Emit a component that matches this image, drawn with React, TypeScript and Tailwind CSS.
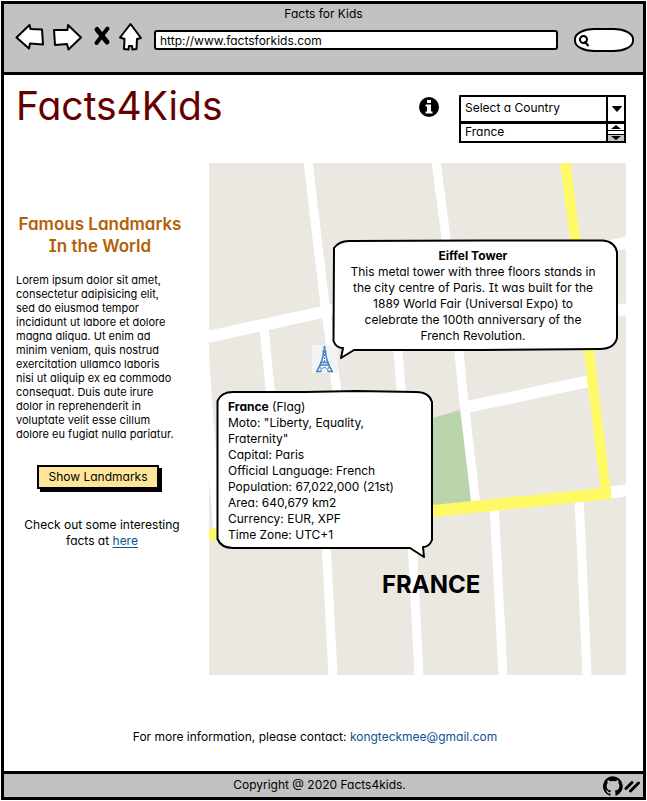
import type { ReactNode } from "react";

const intro = [
  "Lorem ipsum dolor sit amet,",
  "consectetur adipisicing elit,",
  "sed do eiusmod tempor",
  "incididunt ut labore et dolore",
  "magna aliqua. Ut enim ad",
  "minim veniam, quis nostrud",
  "exercitation ullamco laboris",
  "nisi ut aliquip ex ea commodo",
  "consequat. Duis aute irure",
  "dolor in reprehenderit in",
  "voluptate velit esse cillum",
  "dolore eu fugiat nulla pariatur.",
];

const towerFacts = [
  "This metal tower with three floors stands in",
  "the city centre of Paris. It was built for the",
  "1889 World Fair (Universal Expo) to",
  "celebrate the 100th anniversary of the",
  "French Revolution.",
];

const countryFacts = [
  'Moto: "Liberty, Equality,',
  'Fraternity"',
  "Capital: Paris",
  "Official Language: French",
  "Population: 67,022,000 (21st)",
  "Area: 640,679 km2",
  "Currency: EUR, XPF",
  "Time Zone: UTC+1",
];

function Lines({ items }: { items: string[] }) {
  return (
    <>
      {items.map((line) => (
        <span key={line} className="block whitespace-nowrap">
          {line}
        </span>
      ))}
    </>
  );
}

function NavButton({ label, children }: { label: string; children: ReactNode }) {
  return (
    <button type="button" aria-label={label} className="shrink-0">
      {children}
    </button>
  );
}

function BrowserBar() {
  return (
    <header className="h-[71px] border-b-[3px] border-black bg-[#c2c2c2]">
      <p className="pt-0.5 text-center text-xs leading-4">Facts for Kids</p>
      <div className="flex items-start pl-[11px] pr-[9px]">
        <NavButton label="Back">
          <svg width="30" height="30" viewBox="0 0 30 30" fill="#fff" stroke="#000" strokeWidth="2" strokeLinejoin="round">
            <path d="M1.500 15.500 L14.500 3 L15.500 7 L27 7.500 L28 22.500 L15 21.500 L14 26.500 Z" />
          </svg>
        </NavButton>
        <NavButton label="Forward">
          <svg className="ml-2" width="30" height="30" viewBox="0 0 30 30" fill="#fff" stroke="#000" strokeWidth="2" strokeLinejoin="round">
            <path d="M1 8 L14.500 8 L15 3 L28 15.500 L15.500 27.500 L14 22 L2 23 Z" />
          </svg>
        </NavButton>
        <NavButton label="Stop">
          <svg className="ml-2" width="24" height="30" viewBox="0 0 24 30" fill="none" stroke="#000" strokeLinecap="round">
            <path d="M6 7.500 L16 20" strokeWidth="5" />
            <path d="M16.500 6.500 L5.500 21" strokeWidth="4" />
          </svg>
        </NavButton>
        <NavButton label="Home">
          <svg className="ml-1" width="24" height="30" viewBox="0 0 24 30" fill="#fff" stroke="#000" strokeWidth="2" strokeLinejoin="round">
            <path d="M11.500 2 L1 15.500 L5.500 17 L5 27 L9.500 27.500 L10 24 L13 24 L13.500 27.500 L17.500 27 L18 17 L22 16 Z" />
          </svg>
        </NavButton>
        <input
          aria-label="Address"
          defaultValue="http://www.factsforkids.com"
          className="mr-4 ml-[11px] mt-2 h-5 min-w-0 flex-1 rounded-[3px] border-2 border-black bg-white px-1 text-xs outline-none"
        />
        <div className="relative mt-1.5 h-6 w-[60px] shrink-0">
          <input
            aria-label="Search"
            className="block h-6 w-full border-2 border-black bg-white pl-5 pr-2 text-xs outline-none [border-radius:20px/11px]"
          />
          <svg className="absolute left-1 top-1.5" width="12" height="14" viewBox="0 0 12 14" fill="none" stroke="#000" strokeWidth="2" strokeLinecap="round">
            <circle cx="5.500" cy="5.500" r="3.500" />
            <path d="M7 8 L10 11.500" />
          </svg>
        </div>
      </div>
    </header>
  );
}

function CountryPicker() {
  return (
    <div className="w-[167px]">
      <div className="relative">
        <select
          aria-label="Select a Country"
          className="block h-7 w-full appearance-none rounded-[1px] border-2 border-black bg-white pb-0.5 pl-1 text-xs outline-none"
        >
          <option>Select a Country</option>
          <option>France</option>
        </select>
        <span className="pointer-events-none absolute inset-y-0 right-0 flex w-5 items-center justify-center border-l-2 border-black">
          <svg width="10" height="6" viewBox="0 0 10 6">
            <path d="M0.500 0.500 H9.500 L5 5.500 Z" stroke="#000" strokeLinejoin="round" />
          </svg>
        </span>
      </div>
      <div className="-mt-px flex h-[21px] border-2 border-black bg-white">
        <ul role="listbox" aria-label="Countries" className="flex-1 pl-1 text-xs leading-4">
          <li role="option" aria-selected="false">
            France
          </li>
        </ul>
        <div className="flex w-[18px] flex-col border-l-2 border-black">
          <button type="button" aria-label="Scroll up" className="flex flex-1 items-center justify-center border-b border-black">
            <svg width="10" height="4" viewBox="0 0 10 4">
              <path d="M0 4 H10 L5 0 Z" />
            </svg>
          </button>
          <span className="h-1 border-b border-black" />
          <button type="button" aria-label="Scroll down" className="flex flex-1 items-center justify-center bg-[#c2c2c2]">
            <svg width="10" height="4" viewBox="0 0 10 4">
              <path d="M0 0 H10 L5 4 Z" />
            </svg>
          </button>
        </div>
      </div>
    </div>
  );
}

function Sidebar() {
  return (
    <aside className="w-[168px] shrink-0 pt-[50px]">
      <h2 className="text-center text-[17px] font-semibold leading-[22px] text-[#b45f06]">
        <span className="block whitespace-nowrap">Famous Landmarks</span>
        <span className="block">In the World</span>
      </h2>
      <p className="pt-4 text-[11px] leading-[14px]">
        <Lines items={intro} />
      </p>
      <div className="flex justify-center pr-1 pt-6">
        <button
          type="button"
          className="h-6 w-[122px] whitespace-nowrap border-2 border-black bg-[#ffe599] text-xs shadow-[3px_3px_0_0_#000]"
        >
          Show Landmarks
        </button>
      </div>
      <p className="pl-1 pt-7 text-center text-xs leading-4">
        <span className="block whitespace-nowrap">Check out some interesting</span>
        facts at{" "}
        <a href="#facts" className="text-[#0b5394] underline underline-offset-2">
          here
        </a>
      </p>
    </aside>
  );
}

function Streets() {
  return (
    <svg className="absolute inset-0 h-full w-full" viewBox="0 0 417 512" preserveAspectRatio="xMidYMid slice" fill="none">
      <rect width="417" height="512" fill="#ebe8e1" />
      <path d="M200 262 L251 247 L263 340 L200 346 Z" fill="#bad4ac" />
      <g stroke="#fff" strokeWidth="9">
        <path d="M99 -2 L116 142 L128 229 L143 360" />
        <path d="M55 165 L61 225 L75 366" />
        <path d="M-5 185 L-2 230 L9 372" />
        <path d="M227 -2 L237 75 L250 189 L254 230 L267 342" />
        <path d="M170 138 L189 189 L192 225 L203 352" />
        <path d="M115 358 L118 397 L124 513" />
        <path d="M201 350 L204 397 L210 513" />
        <path d="M285 342 L288 397 L294 513" />
        <path d="M370 334 L373 397 L378 513" />
      </g>
      <g stroke="#fff" strokeWidth="12">
        <path d="M-2 174 L114 149 L420 79" />
        <path d="M376 151 L420 146" />
        <path d="M258 244 L380 218" />
        <path d="M398 330 L420 327" />
      </g>
      <g stroke="#fff966">
        <path d="M356 -2 L366 75 L380 189 L397 330" strokeWidth="10" />
        <path d="M-2 372 L224 348 L402 330" strokeWidth="12" />
      </g>
    </svg>
  );
}

function EiffelIcon() {
  return (
    <svg width="26" height="28" viewBox="0 0 26 28" fill="none" stroke="#3d85c6">
      <rect width="26" height="28" fill="#f3f3f3" stroke="none" />
      <path d="M12.500 1 V5" strokeWidth="2" />
      <path d="M11.500 5 C11.500 12 10 18 5 26 M13.500 5 C13.500 12 15 18 20 26" strokeWidth="1.500" />
      <path d="M12.500 6 V17" strokeDasharray="2 1" />
      <path d="M8 17.500 H17 M7 20 H18" strokeWidth="1.500" />
      <path d="M9 26 C10 21.500 15 21.500 16 26" />
      <path d="M4 26.500 H9.500 M15.500 26.500 H21" strokeWidth="1.500" />
      <path d="M8 22 L9 24 M17 22 L16 24" />
    </svg>
  );
}

function LandmarkMap() {
  return (
    <section aria-label="Map of France" className="relative h-[512px] min-w-0 flex-1 overflow-hidden">
      <Streets />
      <div className="absolute left-[103px] top-[182px]">
        <EiffelIcon />
      </div>
      <div className="absolute left-[123px] top-[76px] h-[121px] w-[286px]">
        <svg className="absolute inset-0" width="286" height="121" viewBox="0 0 286 121" fill="#fff" stroke="#000" strokeWidth="2" strokeLinejoin="round">
          <path d="M2 9 C5 5 10 2 17 2 L150 1.500 L271 1.500 C279 2 284 7 285 13 L285 99 C283 107 276 110 268 110 L150 111 L22 111 L9 119 L11 109 C6 109 3 106 1.500 102 Z" />
        </svg>
        <div className="relative pr-1 pt-[9px] text-center text-xs leading-4">
          <h3 className="font-bold">Eiffel Tower</h3>
          <p>
            <Lines items={towerFacts} />
          </p>
        </div>
      </div>
      <div className="absolute left-[7px] top-[227px] h-[168px] w-[218px]">
        <svg className="absolute inset-0" width="218" height="168" viewBox="0 0 218 168" fill="#fff" stroke="#000" strokeWidth="2" strokeLinejoin="round">
          <path d="M1.500 11 C4 5 9 2 17 2 L90 2 L140 1 L200 2 C209 2 214 5 216 12 L216 150 C214 155 211 157 207 157 L208 167 L194 158 L17 158 C9 158 4 155 1.500 149 Z" />
        </svg>
        <div className="relative pl-3 pt-[9px] text-xs leading-4">
          <h3>
            <b>France</b> (Flag)
          </h3>
          <p>
            <Lines items={countryFacts} />
          </p>
        </div>
      </div>
      <h2 className="absolute left-[173px] top-[408px] text-2xl font-bold leading-7">FRANCE</h2>
    </section>
  );
}

export default function App() {
  return (
    <div className="flex min-h-screen flex-col bg-white p-px font-[Inter,'Noto_Sans',sans-serif] text-black [font-feature-settings:'cv11','cv08','cv04']">
      <div className="flex flex-1 flex-col border-[3px] border-black">
        <BrowserBar />
        <main className="flex-1 pl-3 pr-[17px]">
          <div className="flex items-start pt-3">
            <h1 className="flex-1 text-[39px] leading-[38px] text-[#660000]">Facts4Kids</h1>
            <button type="button" aria-label="Information" className="mt-2.5 mr-5">
              <svg width="20" height="20" viewBox="0 0 20 20">
                <circle cx="10" cy="10" r="10" />
                <path d="M8 3 H12 V6 H8 Z M6.500 7.500 H12 V14.500 H13.500 V16.500 H6.500 V14.500 H8 V9.500 H6.500 Z" fill="#fff" />
              </svg>
            </button>
            <div className="pt-2">
              <CountryPicker />
            </div>
          </div>
          <div className="flex gap-[25px] pt-5">
            <Sidebar />
            <LandmarkMap />
          </div>
          <p className="pr-3 pt-[54px] text-center text-xs leading-4">
            For more information, please contact:{" "}
            <a href="mailto:kongteckmee@gmail.com" className="text-[#0b5394]">
              kongteckmee@gmail.com
            </a>
          </p>
        </main>
        <footer className="flex h-[26px] items-center border-t-[3px] border-black bg-[#c2c2c2] text-xs">
          <span className="w-8" />
          <p className="flex-1 pb-0.5 text-center leading-4">Copyright @ 2020 Facts4kids.</p>
          <a href="#github" aria-label="GitHub" className="flex w-10 items-center">
            <svg width="20" height="20" viewBox="0 0 24 24">
              <path d="M12 .3a12 12 0 0 0-3.800 23.400c.6.100.8-.3.800-.6v-2.100c-3.300.7-4-1.600-4-1.600-.6-1.400-1.400-1.800-1.400-1.800-1-.7.100-.7.100-.7 1.200.1 1.900 1.200 1.900 1.200 1 1.800 2.800 1.300 3.500 1 .1-.8.400-1.300.8-1.600-2.700-.3-5.500-1.300-5.500-5.900 0-1.300.5-2.400 1.200-3.200-.1-.3-.5-1.500.1-3.200 0 0 1-.3 3.300 1.200a11.500 11.500 0 0 1 6 0c2.300-1.500 3.300-1.200 3.300-1.200.7 1.700.2 2.900.1 3.200.8.800 1.200 1.900 1.200 3.200 0 4.600-2.800 5.600-5.500 5.900.4.400.8 1.100.8 2.200v3.300c0 .3.200.7.800.6A12 12 0 0 0 12 .3" />
            </svg>
            <svg width="18" height="14" viewBox="0 0 18 14" fill="none" stroke="#000" strokeWidth="3" strokeLinecap="round">
              <path d="M3 9.500 L9 3.500 M7.500 12 L15.500 4" />
            </svg>
          </a>
        </footer>
      </div>
    </div>
  );
}
